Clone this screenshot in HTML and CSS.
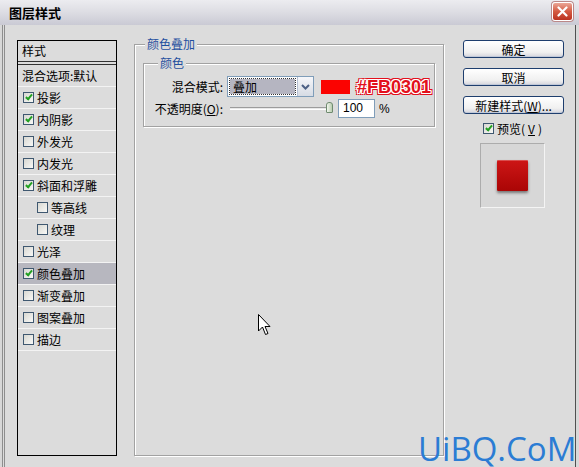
FILE: index.html
```html
<!DOCTYPE html>
<html lang="zh-CN">
<head>
    <meta charset="UTF-8">
    <title>图层样式</title>
    <link rel="stylesheet" href="styles.css">
</head>
<body>
    <div class="window">
        <div class="titlebar">
            <span class="title">图层样式</span>
            <span class="close">
                <svg width="11" height="11" viewBox="0 0 11 11"><path d="M1.5 1.5 L9.5 9.5 M9.5 1.5 L1.5 9.5" stroke="#fff" stroke-width="2.2" stroke-linecap="round"/></svg>
            </span>
        </div>
        <div class="dialog">
            <div class="style-list">
                <div class="list-head">样式</div>
                <div class="item plain">混合选项:默认</div>
                <div class="item"><span class="check on"></span>投影</div>
                <div class="item"><span class="check on"></span>内阴影</div>
                <div class="item"><span class="check"></span>外发光</div>
                <div class="item"><span class="check"></span>内发光</div>
                <div class="item"><span class="check on"></span>斜面和浮雕</div>
                <div class="item sub"><span class="check"></span>等高线</div>
                <div class="item sub"><span class="check"></span>纹理</div>
                <div class="item"><span class="check"></span>光泽</div>
                <div class="item active"><span class="check on"></span>颜色叠加</div>
                <div class="item"><span class="check"></span>渐变叠加</div>
                <div class="item"><span class="check"></span>图案叠加</div>
                <div class="item"><span class="check"></span>描边</div>
            </div>

            <div class="group outer">
                <span class="legend">颜色叠加</span>
                <div class="group inner">
                    <span class="legend">颜色</span>
                    <div class="row">
                        <span class="field-label">混合模式:</span>
                        <div class="select">
                            <span class="select-value"><span class="focus">叠加</span></span>
                            <span class="select-btn">
                                <svg width="9" height="6" viewBox="0 0 9 6"><path d="M1 1 L4.5 4.5 L8 1" fill="none" stroke="#4d6185" stroke-width="2"/></svg>
                            </span>
                        </div>
                        <span class="swatch"></span>
                        <span class="hex">#FB0301</span>
                    </div>
                    <div class="row second">
                        <span class="field-label">不透明度(<u>O</u>):</span>
                        <div class="slider"><span class="thumb"></span></div>
                        <span class="num">100</span>
                        <span class="unit">%</span>
                    </div>
                </div>
            </div>

            <div class="side">
                <button class="btn">确定</button>
                <button class="btn">取消</button>
                <button class="btn">新建样式(<u>W</u>)...</button>
                <div class="preview-check"><span class="check on"></span>预览(<u>V</u>)</div>
                <div class="preview"><div class="preview-swatch"></div></div>
            </div>
        </div>

        <svg class="cursor" width="14" height="22" viewBox="0 0 14 22">
            <path d="M0.5 0.5 L0.5 17 L4.5 13 L7.5 20.5 L10 19.5 L7 12.5 L12 12.5 Z" fill="#fff" stroke="#000" stroke-width="1"/>
        </svg>
        <div class="watermark">UiBQ.CoM</div>
    </div>
</body>
</html>
```

FILE: styles.css
```css
body {
    margin: 0;
    background: #d8d8d8;
    font-family: "Noto Sans CJK SC", "Liberation Sans", sans-serif;
    font-size: 12px;
    color: #000;
}
.window {
    position: relative;
    width: 579px;
    height: 467px;
    overflow: hidden;
    background: #d8d8d8;
}
.titlebar {
    height: 25px;
    display: flex;
    align-items: center;
    justify-content: space-between;
    padding: 0 6px 0 9px;
    background: linear-gradient(#ececf0, #dedee4 45%, #cacad4);
}
.title {
    font-size: 13px;
    font-weight: bold;
    line-height: 25px;
}
.close {
    width: 21px;
    height: 19px;
    margin-top: -2px;
    box-sizing: border-box;
    border: 1px solid #fff;
    border-radius: 3px;
    background: linear-gradient(#eaa696, #d45a42 50%, #bb3220);
    box-shadow: 0 0 0 1px #b88;
    display: flex;
    align-items: center;
    justify-content: center;
}
.dialog {
    display: flex;
    align-items: flex-start;
    width: 574px;
    height: 442px;
    margin-left: 2px;
    box-sizing: border-box;
    border-left: 3px double #8e8e8e;
    border-right: 1px solid #505050;
    padding: 15px 0 0 12px;
    background: #dcdcdc;
}

/* left list */
.style-list {
    width: 100px;
    height: 416px;
    box-sizing: border-box;
    border: 1px solid #000;
    background: #dcdcdc;
}
.list-head {
    height: 20px;
    line-height: 20px;
    padding-left: 4px;
    border-bottom: 4px double #333;
}
.item {
    height: 21px;
    line-height: 21px;
    display: flex;
    align-items: center;
    gap: 3px;
    padding-left: 5px;
    border-bottom: 1px solid #f3f3f3;
    white-space: nowrap;
}
.item.plain {
    padding-left: 4px;
}
.item.sub {
    padding-left: 19px;
}
.item.active {
    background: #b7b7bf;
}
.check {
    position: relative;
    flex: none;
    width: 11px;
    height: 11px;
    box-sizing: border-box;
    border: 1px solid #3f5870;
    background: linear-gradient(135deg, #d8d8d2, #f8f8f6);
}
.check.on::after {
    content: "";
    position: absolute;
    left: 3px;
    top: 0px;
    width: 2px;
    height: 5px;
    border: solid #22a022;
    border-width: 0 2px 2px 0;
    transform: rotate(40deg);
}

/* group boxes */
.group {
    position: relative;
    box-sizing: border-box;
    border: 1px solid #a2a2a2;
    box-shadow: 1px 1px 0 #fff, inset 1px 1px 0 #fff;
}
.legend {
    position: absolute;
    top: -9px;
    left: 10px;
    padding: 0 2px;
    line-height: 16px;
    background: #dcdcdc;
    color: #1f4f9f;
}
.outer {
    margin: 4px 0 0 17px;
    width: 310px;
    height: 412px;
}
.inner {
    margin: 18px 0 0 8px;
    width: 292px;
    height: 64px;
    padding-top: 12px;
}
.inner .legend {
    left: 14px;
}
.row {
    display: flex;
    align-items: center;
    height: 21px;
}
.row.second {
    margin-top: 2px;
    height: 19px;
}
.field-label {
    width: 79px;
    margin-right: 4px;
    text-align: right;
    white-space: nowrap;
}
.select {
    display: flex;
    width: 87px;
    height: 21px;
    box-sizing: border-box;
    border: 1px solid #7f9db9;
    background: #fff;
}
.select-value {
    flex: 1;
    padding: 2px;
}
.focus {
    display: block;
    height: 15px;
    line-height: 15px;
    padding-left: 3px;
    background: #b5b5c1;
    outline: 1px dotted #333;
}
.select-btn {
    width: 15px;
    border-left: 1px solid #b6c0d2;
    background: linear-gradient(#f6f7fa, #d6dbe4);
    display: flex;
    align-items: center;
    justify-content: center;
}
.swatch {
    width: 29px;
    height: 14px;
    margin-left: 7px;
    background: #fb0301;
}
.hex {
    margin-left: 7px;
    font-family: "Liberation Sans", Arial, sans-serif;
    font-size: 18px;
    font-weight: bold;
    line-height: 18px;
    color: #e3101c;
    text-shadow:
        1px 0 #fff, -1px 0 #fff, 0 1px #fff, 0 -1px #fff,
        1px 1px #fff, -1px -1px #fff, 1px -1px #fff, -1px 1px #fff,
        2px 0 #e3101c, -2px 0 #e3101c, 0 2px #e3101c, 0 -2px #e3101c,
        2px 2px #e3101c, -2px -2px #e3101c, 2px -2px #e3101c, -2px 2px #e3101c;
}
.slider {
    position: relative;
    width: 108px;
    height: 19px;
    margin-right: 3px;
}
.slider::before {
    content: "";
    position: absolute;
    left: 3px;
    right: 5px;
    top: 8px;
    height: 1px;
    border-top: 1px solid #9c9c9c;
    border-bottom: 1px solid #fff;
    background: #e8e8e8;
}
.thumb {
    position: absolute;
    left: 99px;
    top: 3px;
    width: 7px;
    height: 11px;
    box-sizing: border-box;
    border: 1px solid #6f8a6f;
    border-radius: 3px 3px 1px 1px;
    background: linear-gradient(90deg, #f2f6ee, #b9cdb0);
}
.num {
    width: 37px;
    height: 19px;
    box-sizing: border-box;
    border: 1px solid #7f9db9;
    background: #fff;
    padding-left: 4px;
    line-height: 17px;
    font-family: "Liberation Sans", Arial, sans-serif;
    font-size: 12px;
}
.unit {
    margin-left: 4px;
    font-family: "Liberation Sans", Arial, sans-serif;
}

/* right column */
.side {
    margin-left: 19px;
    width: 101px;
    display: flex;
    flex-direction: column;
}
.btn {
    height: 18px;
    margin: 0 0 10px;
    padding: 0;
    border: 1px solid #1e3e6e;
    border-radius: 3px;
    background: linear-gradient(#ffffff, #f0f0f0 70%, #d4d4dc);
    box-shadow: inset 0 -1px 0 #c0c8d8;
    font-family: "Noto Sans CJK SC", sans-serif;
    font-size: 12px;
    line-height: 15px;
    color: #000;
}
.preview-check {
    display: flex;
    align-items: center;
    gap: 3px;
    height: 11px;
    margin-top: -1px;
    padding-left: 20px;
    line-height: 11px;
    white-space: nowrap;
}
.preview {
    margin: 9px 0 0 17px;
    width: 65px;
    height: 65px;
    box-sizing: border-box;
    border: 1px solid;
    border-color: #acacac #f4f4f4 #f4f4f4 #acacac;
    background: #d7d7d7;
    display: flex;
    align-items: center;
    justify-content: center;
}
.preview-swatch {
    width: 31px;
    height: 31px;
    border-radius: 1px;
    background: linear-gradient(#cd1616, #aa0505);
    box-shadow: 0 2px 3px rgba(0, 0, 0, 0.45), inset 0 1px 0 rgba(255, 255, 255, 0.25);
}

/* overlays */
.cursor {
    position: absolute;
    left: 258px;
    top: 314px;
}
.watermark {
    position: absolute;
    left: 418px;
    top: 432px;
    font-family: "Open Sans", sans-serif;
    font-size: 33px;
    line-height: 33px;
    color: #2b7cd4;
}
```
